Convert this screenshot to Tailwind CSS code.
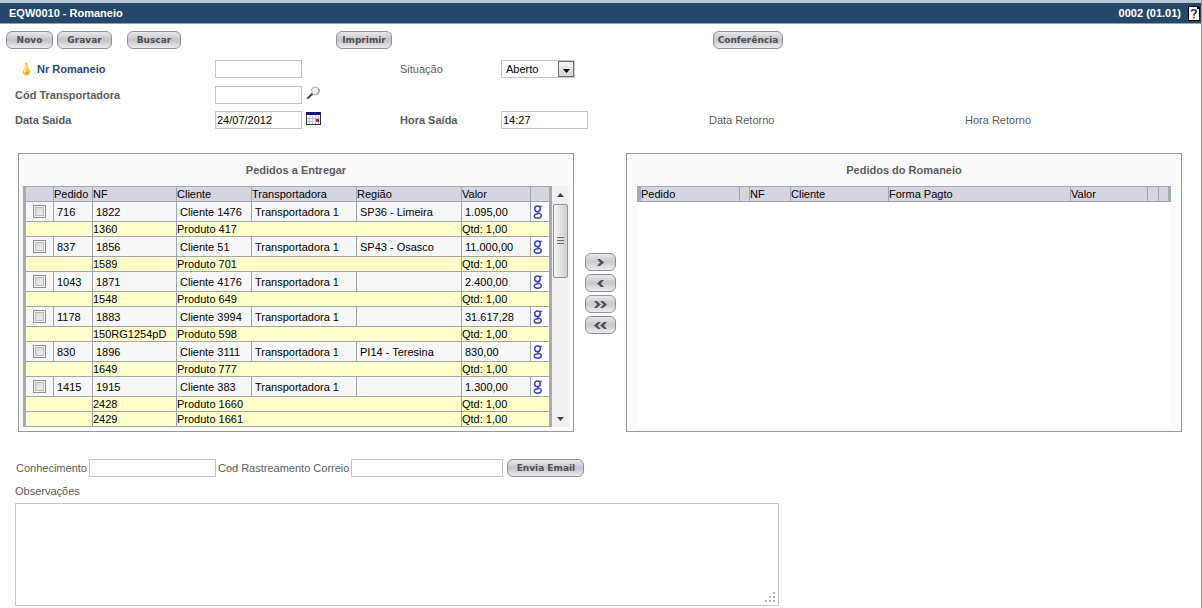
<!DOCTYPE html>
<html lang="pt-BR">
<head>
<meta charset="utf-8">
<title>EQW0010 - Romaneio</title>
<script src="https://cdn.jsdelivr.net/npm/@tailwindcss/browser@4"></script>
</head>
<body class="min-h-screen border-r border-[#9a9ea8] bg-white font-['Liberation_Sans',Arial,sans-serif] text-[11px] leading-[14px] text-[#5c5c5c]">

<header class="flex h-6 items-center justify-between border-t-3 border-b border-t-[#b9c9da] border-b-[#8da3b8] bg-[#25486a] pl-[9px] text-[11px] font-bold text-white">
  <h1>EQW0010 - Romaneio</h1>
  <div class="flex items-center gap-[7px]">
    <span>0002 (01.01)</span>
    <button type="button" aria-label="Ajuda" class="mr-px">
      <svg width="12" height="15" viewBox="0 0 12 15"><path d="M0 0h10l2 2v13H0z" fill="#000"/><path d="M1 1h8v2h2v11H1z" fill="#fffff0"/><path d="M3.500 5.500Q3.500 3.700 5.800 3.700Q8.200 3.700 8.200 5.500Q8.200 6.600 6.900 7.400Q5.900 8 5.900 9.400M5.900 10.700v1.600" fill="none" stroke="#1a1a80" stroke-width="1.600"/></svg>
    </button>
  </div>
</header>

<main>
  <div class="grid grid-cols-[51px_70px_209px_377px_1fr] pt-[7px] pl-1.5 font-['DejaVu_Sans',Verdana,sans-serif] text-[9px] font-bold text-[#505050]">
    <button type="button" class="h-[18px] w-[47px] rounded-md border border-[#8e8e94] bg-linear-to-b from-[#e9e9ec] via-[#c2c2c8] to-[#ededf0]">Novo</button>
    <button type="button" class="h-[18px] w-[55px] rounded-md border border-[#8e8e94] bg-linear-to-b from-[#e9e9ec] via-[#c2c2c8] to-[#ededf0]">Gravar</button>
    <button type="button" class="h-[18px] w-[54px] rounded-md border border-[#8e8e94] bg-linear-to-b from-[#e9e9ec] via-[#c2c2c8] to-[#ededf0]">Buscar</button>
    <button type="button" class="h-[18px] w-[56px] rounded-md border border-[#8e8e94] bg-linear-to-b from-[#e9e9ec] via-[#c2c2c8] to-[#ededf0]">Imprimir</button>
    <button type="button" class="h-[18px] w-[70px] rounded-md border border-[#8e8e94] bg-linear-to-b from-[#e9e9ec] via-[#c2c2c8] to-[#ededf0]">Conferência</button>
  </div>

  <form class="grid grid-cols-[200px_185px_101px_208px_256px_1fr] grid-rows-[26px_26px_24px] items-center pt-[7px] pl-[15px]">
    <label for="nr" class="flex items-center gap-1.5 pl-[7px] font-bold text-[#2c4a78]">
      <svg width="9" height="14" viewBox="0 0 9 14"><path d="M4.200.8C5.800.8 5.600 3 5.700 5.200C5.800 6.800 8.200 7.800 8.200 10.200C8.200 12.300 6.500 13.200 4.500 13.200C2.300 13.200.8 12 .8 10.200C.8 8 3.100 7 3.100 5.200C3.100 3 2.800.8 4.200.8Z" fill="#f0cf35" stroke="#dcc05a" stroke-width=".6"/><path d="M4 2v4Q2.400 8 2.400 10" stroke="#fff6a8" stroke-width="1.200" fill="none"/><circle cx="5" cy="11" r="1" fill="#b8952a"/></svg>
      Nr Romaneio
    </label>
    <input id="nr" type="text" class="h-[18px] w-[87px] border border-[#c4c4c4] bg-white px-0.5 text-black">
    <label for="sit">Situação</label>
    <div class="grid h-[18px] w-[74px] grid-cols-[56px_1fr] border border-[#c4c4c4] bg-white">
      <select id="sit" class="col-span-2 col-start-1 row-start-1 h-4 appearance-none pl-1 leading-4 text-black"><option>Aberto</option></select>
      <span class="pointer-events-none col-start-2 row-start-1 flex h-4 items-center justify-center border border-[#707070] bg-linear-to-b from-[#f4f4f4] to-[#d4d4d4]">
        <svg width="7" height="4" viewBox="0 0 7 4" class="mt-1"><path d="M0 0h7L3.500 4z" fill="#000"/></svg>
      </span>
    </div>

    <label for="cod" class="col-start-1 row-start-2 font-bold">Cód Transportadora</label>
    <div class="row-start-2 flex items-center gap-1">
      <input id="cod" type="text" class="h-[18px] w-[87px] border border-[#c4c4c4] bg-white px-0.5 text-black">
      <button type="button" aria-label="Pesquisar" class="mb-1">
        <svg width="14" height="14" viewBox="0 0 14 14"><circle cx="9.300" cy="4.800" r="3.700" fill="#f3f3f5" stroke="#b5b5ba" stroke-width="1.200"/><path d="M12.600 2.800a3.800 3.800 0 0 1-2.400 5.700" fill="none" stroke="#8b8b92"/><path d="M6.300 7.800L1.300 12.600" stroke="#3a3a3e" stroke-width="2"/></svg>
      </button>
    </div>

    <label for="saida" class="col-start-1 row-start-3 font-bold">Data Saída</label>
    <div class="row-start-3 flex items-center gap-1">
      <input id="saida" type="text" value="24/07/2012" class="h-[18px] w-[87px] border border-[#c4c4c4] bg-white px-px text-black">
      <button type="button" aria-label="Calendário" class="mb-1">
        <svg width="15" height="13" viewBox="0 0 15 13" shape-rendering="crispEdges"><path d="M0 0h15v13H0z" fill="#333"/><path d="M1 3h13v9H1z" fill="#fff"/><path d="M0 0h15v3H0z" fill="#14147a"/><path d="M3.500 4v8M6.500 4v8M9.500 4v8M12.500 4v8M1 6.500h13M1 9.500h13" stroke="#c0c0cc"/><path d="M10 7h3v3h-3z" fill="#c22a3c"/></svg>
      </button>
    </div>
    <label for="hora" class="row-start-3 font-bold">Hora Saída</label>
    <input id="hora" type="text" value="14:27" class="row-start-3 h-[18px] w-[87px] border border-[#c4c4c4] bg-white px-px text-black">
    <span class="row-start-3">Data Retorno</span>
    <span class="row-start-3">Hora Retorno</span>
  </form>

  <div class="grid grid-cols-[minmax(0,1fr)_52px_minmax(0,1fr)] pt-[21px] pr-[19px] pl-[18px]">
    <section class="border border-[#9b9b9b] bg-[#fafafa] px-1 pt-[9px] pb-1">
      <h2 class="pb-2 text-center leading-[15px] font-bold">Pedidos a Entregar</h2>
      <div class="flex">
        <table class="min-w-0 flex-1 table-fixed border-separate border-spacing-0 border-x-3 border-t border-[#a4abb3] text-[11px] leading-[14px] text-black">
          <colgroup><col class="w-[27px]"><col class="w-[39px]"><col class="w-[84px]"><col class="w-[75px]"><col class="w-[105px]"><col><col class="w-[69px]"><col class="w-[19px]"></colgroup>
          <thead class="bg-[#d5d5e0] text-left">
            <tr>
              <th class="h-[15px] border-b border-[#a0a6ae] p-0"></th>
              <th class="border-b border-l border-[#a0a6ae] p-0 font-normal">Pedido</th>
              <th class="border-b border-l border-[#a0a6ae] p-0 font-normal">NF</th>
              <th class="border-b border-l border-[#a0a6ae] p-0 font-normal">Cliente</th>
              <th class="border-b border-l border-[#a0a6ae] p-0 font-normal">Transportadora</th>
              <th class="border-b border-l border-[#a0a6ae] p-0 font-normal">Região</th>
              <th class="border-b border-l border-[#a0a6ae] p-0 font-normal">Valor</th>
              <th class="border-b border-l border-[#a0a6ae] p-0"></th>
            </tr>
          </thead>
          <tbody id="pedidos"></tbody>
        </table>
        <div class="flex w-[17px] flex-col items-center bg-[#f0f0f0]" aria-hidden="true">
          <span class="flex h-[18px] items-center"><svg width="7" height="4" viewBox="0 0 7 4"><path d="M0 4L3.500 0L7 4z" fill="#444"/></svg></span>
          <span class="flex h-[74px] w-[15px] items-center justify-center rounded-xs border border-[#939393] bg-linear-to-r from-[#f5f5f5] to-[#cfcfd2]"><svg width="7" height="8" viewBox="0 0 7 8"><path d="M0 .5h7M0 3.500h7M0 6.500h7" stroke="#666"/></svg></span>
          <span class="mt-auto flex h-[17px] items-center"><svg width="7" height="4" viewBox="0 0 7 4"><path d="M0 0h7L3.500 4z" fill="#444"/></svg></span>
        </div>
      </div>
    </section>

    <div class="flex flex-col items-center gap-[3px] pt-[100px]">
      <button type="button" aria-label="Adicionar" class="flex h-[18px] w-[31px] items-center justify-center rounded-md border border-[#8e8e94] bg-linear-to-b from-[#e9e9ec] via-[#c8c8cd] to-[#ededf0]"><svg width="7" height="7" viewBox="0 0 7 7"><path d="M0 0h3l4 3.500L3 7H0l3.200-3.500z" fill="#505050"/></svg></button>
      <button type="button" aria-label="Remover" class="flex h-[18px] w-[31px] items-center justify-center rounded-md border border-[#8e8e94] bg-linear-to-b from-[#e9e9ec] via-[#c8c8cd] to-[#ededf0]"><svg width="7" height="7" viewBox="0 0 7 7"><path d="M7 0H4L0 3.500L4 7h3L3.800 3.500z" fill="#505050"/></svg></button>
      <button type="button" aria-label="Adicionar todos" class="flex h-[18px] w-[31px] items-center justify-center rounded-md border border-[#8e8e94] bg-linear-to-b from-[#e9e9ec] via-[#c8c8cd] to-[#ededf0]"><svg width="13" height="7" viewBox="0 0 13 7"><path d="M0 0h2.800l4 3.500L2.800 7H0l3.200-3.500zM6.200 0H9l4 3.500L9 7H6.200l3.200-3.500z" fill="#505050"/></svg></button>
      <button type="button" aria-label="Remover todos" class="flex h-[18px] w-[31px] items-center justify-center rounded-md border border-[#8e8e94] bg-linear-to-b from-[#e9e9ec] via-[#c8c8cd] to-[#ededf0]"><svg width="13" height="7" viewBox="0 0 13 7"><path d="M13 0h-2.800l-4 3.500l4 3.500H13L9.800 3.500zM6.800 0H4L0 3.500L4 7h2.800L3.600 3.500z" fill="#505050"/></svg></button>
    </div>

    <section class="flex flex-col border border-[#9b9b9b] bg-[#fafafa] px-2.5 pt-[9px] pb-1">
      <h2 class="pb-2 text-center leading-[15px] font-bold">Pedidos do Romaneio</h2>
      <div class="flex-1 bg-white">
        <table class="w-full table-fixed border-separate border-spacing-0 border-t border-r-3 border-l-4 border-[#a4abb3] bg-[#d5d5e0] text-left text-[11px] leading-[14px] text-black">
          <colgroup><col class="w-[98px]"><col class="w-[10px]"><col class="w-[41px]"><col class="w-[98px]"><col><col class="w-[77px]"><col class="w-[11px]"><col class="w-[10px]"></colgroup>
          <thead>
            <tr>
              <th class="h-[15px] border-b border-[#a0a6ae] p-0 font-normal">Pedido</th>
              <th class="border-b border-l border-[#a0a6ae] p-0"></th>
              <th class="border-b border-l border-[#a0a6ae] p-0 font-normal">NF</th>
              <th class="border-b border-l border-[#a0a6ae] p-0 font-normal">Cliente</th>
              <th class="border-b border-l border-[#a0a6ae] p-0 font-normal">Forma Pagto</th>
              <th class="border-b border-l border-[#a0a6ae] p-0 font-normal">Valor</th>
              <th class="border-b border-l border-[#a0a6ae] p-0"></th>
              <th class="border-b border-l border-[#a0a6ae] p-0"></th>
            </tr>
          </thead>
        </table>
      </div>
    </section>
  </div>

  <div class="flex items-center gap-0.5 pt-[27px] pl-4">
    <label for="conh">Conhecimento</label>
    <input id="conh" type="text" class="h-[18px] w-[127px] border border-[#c4c4c4] bg-white px-0.5 text-black">
    <label for="rastr">Cod Rastreamento Correio</label>
    <input id="rastr" type="text" class="mr-0.5 h-[18px] w-[152px] border border-[#c4c4c4] bg-white px-0.5 text-black">
    <button type="button" class="h-[18px] w-[77px] rounded-md border border-[#8e8e94] bg-linear-to-b from-[#e9e9ec] via-[#c2c2c8] to-[#ededf0] font-['DejaVu_Sans',Verdana,sans-serif] text-[9px] font-bold text-[#505050]">Envia Email</button>
  </div>

  <div class="flex flex-col gap-[5px] pt-[7px] pl-[15px]">
    <label for="obs">Observações</label>
    <div class="grid w-[764px] max-w-full">
      <textarea id="obs" class="col-start-1 row-start-1 h-[103px] resize-none border border-[#c4c4c4] bg-white p-0.5 text-black"></textarea>
      <svg class="pointer-events-none col-start-1 row-start-1 mr-1 mb-1 self-end justify-self-end" width="10" height="10" viewBox="0 0 10 10"><path d="M8 0h2v2H8zM4 4h2v2H4zM8 4h2v2H8zM0 8h2v2H0zM4 8h2v2H4zM8 8h2v2H8z" fill="#b4b4b4"/></svg>
    </div>
  </div>
</main>

<script>
const pedidos = [
  ["716", "1822", "Cliente 1476", "Transportadora 1", "SP36 - Limeira", "1.095,00", [["1360", "Produto 417"]]],
  ["837", "1856", "Cliente 51", "Transportadora 1", "SP43 - Osasco", "11.000,00", [["1589", "Produto 701"]]],
  ["1043", "1871", "Cliente 4176", "Transportadora 1", "", "2.400,00", [["1548", "Produto 649"]]],
  ["1178", "1883", "Cliente 3994", "Transportadora 1", "", "31.617,28", [["150RG1254pD", "Produto 598"]]],
  ["830", "1896", "Cliente 3111", "Transportadora 1", "PI14 - Teresina", "830,00", [["1649", "Produto 777"]]],
  ["1415", "1915", "Cliente 383", "Transportadora 1", "", "1.300,00", [["2428", "Produto 1660"], ["2429", "Produto 1661"]]]
];
document.getElementById("pedidos").innerHTML = pedidos.map(p => `
  <tr class="bg-[#f7f7f7]">
    <td class="h-5 border-b border-[#a0a6ae] p-0"><input type="checkbox" aria-label="Pedido ${p[0]}" class="mx-auto block size-[13px] appearance-none border border-[#8e8f8f] bg-linear-to-br from-[#cfd1d4] to-[#f6f6f6] shadow-[inset_0_0_0_1px_#f4f4f4,inset_0_0_0_2px_#b8bbbf]"></td>
    ${p.slice(0, 6).map(v => `<td class="border-b border-l border-[#a0a6ae] py-0 pr-0 pl-[3px] whitespace-nowrap">${v}</td>`).join("")}
    <td class="border-b border-l border-[#a0a6ae] bg-white p-0">
      <a href="#" aria-label="Pesquisar no Google" class="flex h-[19px] items-center pt-px pl-[2px]"><svg width="10" height="14" viewBox="0 0 10 14" fill="none" stroke="#3a44b8"><ellipse cx="4.500" cy="3.800" rx="2.800" ry="2.900" stroke-width="1.500"/><path d="M6.200 1.300H9.200" stroke-width="1.100"/><path d="M5.800 6.200Q4.200 7 5.200 7.900Q8.600 9 8.300 10.800Q7.900 13.200 4.700 13.200Q1.200 13.100 1.200 11Q1.200 9 5.600 8.800" stroke-width="1.400"/></svg></a>
    </td>
  </tr>
  ${p[6].map(i => `
  <tr class="bg-[#ffffcc]">
    <td colspan="2" class="h-[15px] border-b border-[#a0a6ae] p-0"></td>
    <td class="border-b border-l border-[#a0a6ae] p-0">${i[0]}</td>
    <td colspan="3" class="border-b border-l border-[#a0a6ae] p-0">${i[1]}</td>
    <td colspan="2" class="border-b border-l border-[#a0a6ae] p-0">Qtd: 1,00</td>
  </tr>`).join("")}`).join("");
</script>
</body>
</html>
